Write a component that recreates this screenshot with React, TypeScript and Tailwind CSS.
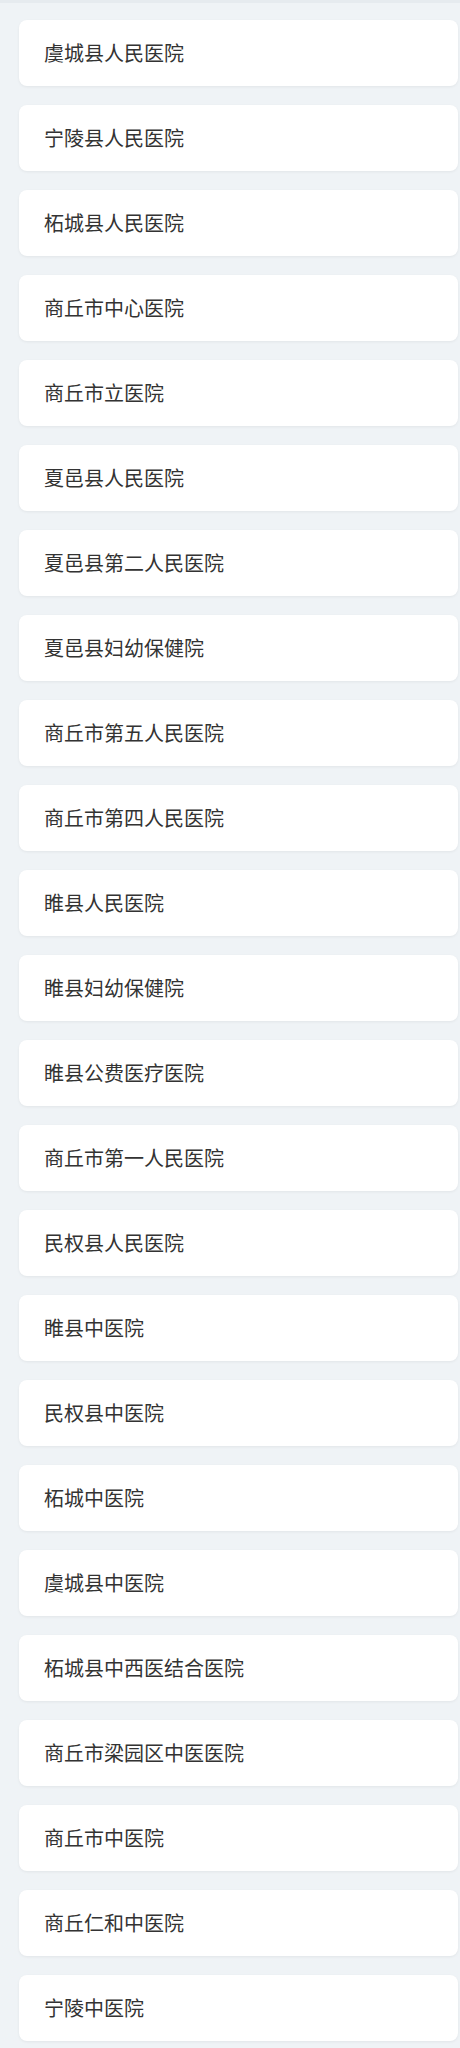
import React from "react";

const names = [
  "虞城县人民医院",
  "宁陵县人民医院",
  "柘城县人民医院",
  "商丘市中心医院",
  "商丘市立医院",
  "夏邑县人民医院",
  "夏邑县第二人民医院",
  "夏邑县妇幼保健院",
  "商丘市第五人民医院",
  "商丘市第四人民医院",
  "睢县人民医院",
  "睢县妇幼保健院",
  "睢县公费医疗医院",
  "商丘市第一人民医院",
  "民权县人民医院",
  "睢县中医院",
  "民权县中医院",
  "柘城中医院",
  "虞城县中医院",
  "柘城县中西医结合医院",
  "商丘市梁园区中医医院",
  "商丘市中医院",
  "商丘仁和中医院",
  "宁陵中医院",
];

export default function App() {
  return (
    <div
      className="min-h-[2048px] w-[460px] bg-[#eff3f6]"
      style={{ fontFamily: '"Noto Sans CJK SC", "Noto Sans", sans-serif' }}
    >
      <div className="h-[3px] bg-[#e6ebef]" />
      <div className="flex flex-col gap-[19px] pt-[17px] pl-[19px] pr-[2px]">
        {names.map((n) => (
          <div
            key={n}
            className="flex h-[66px] items-center rounded-[8px] bg-white pl-[25px] text-[20px] text-[#333] shadow-[0_1px_3px_rgba(0,0,0,0.06)]"
          >
            {n}
          </div>
        ))}
      </div>
    </div>
  );
}
